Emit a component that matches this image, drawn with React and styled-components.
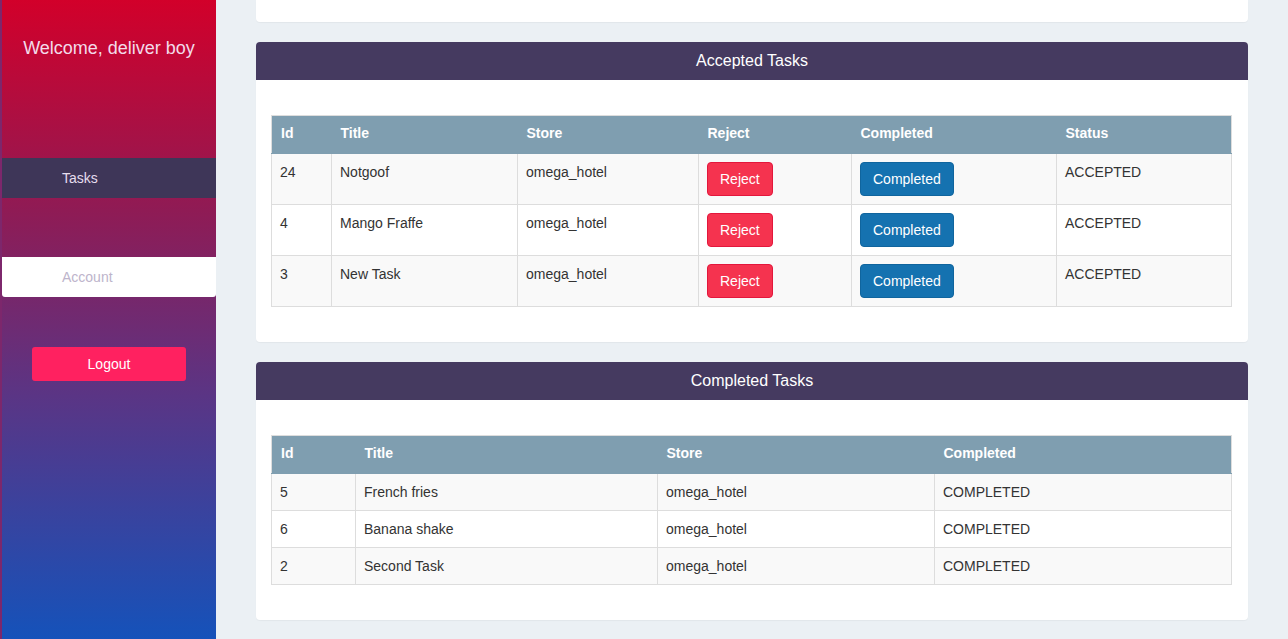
import React from "react";
import styled, { createGlobalStyle } from "styled-components";

const Global = createGlobalStyle`
  html, body {
    margin: 0;
    padding: 0;
    height: 100%;
    overflow: hidden;
  }
  body {
    font-family: "Liberation Sans", Arial, sans-serif;
    font-size: 14px;
    line-height: 1.42857;
    color: #333;
    background-color: #ebf0f4;
  }
`;

const Layout = styled.div`
  display: flex;
  width: 1288px;
  height: 639px;
`;

const Sidebar = styled.aside`
  width: 214px;
  flex-shrink: 0;
  border-left: 2px solid #7d276c;
  background: linear-gradient(to bottom, #d2002a 0%, #8f1b55 33%, #5a3585 62%, #1552ba 100%);
  display: flex;
  flex-direction: column;
`;

const Welcome = styled.h3`
  margin: 0;
  padding: 37px 0 0;
  height: 121px;
  text-align: center;
  font-size: 18px;
  font-weight: 400;
  line-height: 22px;
  color: #f3dbe9;
`;

const NavItem = styled.div`
  height: 40px;
  line-height: 40px;
  padding-left: 60px;
  font-size: 14px;
  color: ${(p) => (p.$active ? "#e6ddee" : "#bdb4cb")};
  background-color: ${(p) => (p.$active ? "#3e3658" : "#fff")};
  border-radius: ${(p) => (p.$active ? "0" : "0 0 3px 3px")};
  margin-top: ${(p) => p.$gap || 0}px;
`;

const LogoutButton = styled.button`
  margin: 50px 0 0 30px;
  width: 154px;
  height: 34px;
  border: none;
  border-radius: 3px;
  background-color: #ff2160;
  color: #fff;
  font-family: inherit;
  font-size: 14px;
`;

const Main = styled.main`
  flex: 1;
  padding: 0 40px;
  display: flex;
  flex-direction: column;
  gap: 20px;
`;

const TopCard = styled.div`
  height: 22px;
  background: #fff;
  border-radius: 0 0 4px 4px;
  box-shadow: 0 1px 1px rgba(0, 0, 0, 0.04);
`;

const Card = styled.section`
  background: #fff;
  border-radius: 4px;
  box-shadow: 0 1px 1px rgba(0, 0, 0, 0.04);
  overflow: hidden;
`;

const CardHeader = styled.header`
  height: 38px;
  line-height: 38px;
  text-align: center;
  background-color: #453a60;
  color: #fff;
  font-size: 16px;
`;

const CardBody = styled.div`
  padding: 35px 16px 35px 15px;
`;

const Table = styled.table`
  width: 100%;
  border-collapse: collapse;
  border: 1px solid #ddd;

  th {
    background-color: #7f9eb0;
    color: #fff;
    font-weight: 700;
    text-align: left;
    padding: 8px 8px 9px 9px;
    border-bottom: 1px solid #7f9eb0;
  }

  td {
    padding: 9px 8px 7px;
    border: 1px solid #ddd;
    vertical-align: top;
  }

  tbody tr:nth-child(odd) {
    background-color: #f9f9f9;
  }
`;

const ActionButton = styled.button`
  display: block;
  height: 34px;
  margin: -1px 0 1px;
  padding: 0 12px;
  border-radius: 4px;
  border: 1px solid ${(p) => (p.$variant === "danger" ? "#e3173c" : "#10659e")};
  background-color: ${(p) => (p.$variant === "danger" ? "#f5334f" : "#1572b0")};
  color: #fff;
  font-family: inherit;
  font-size: 14px;
`;

const accepted = [
  { id: 24, title: "Notgoof", store: "omega_hotel" },
  { id: 4, title: "Mango Fraffe", store: "omega_hotel" },
  { id: 3, title: "New Task", store: "omega_hotel" },
];

const completed = [
  { id: 5, title: "French fries", store: "omega_hotel" },
  { id: 6, title: "Banana shake", store: "omega_hotel" },
  { id: 2, title: "Second Task", store: "omega_hotel" },
];

const App = () => {
  return (
    <>
      <Global />
      <Layout>
        <Sidebar>
          <Welcome>Welcome, deliver boy</Welcome>
          <NavItem $active>Tasks</NavItem>
          <NavItem $gap={59}>Account</NavItem>
          <LogoutButton>Logout</LogoutButton>
        </Sidebar>
        <Main>
          <TopCard />
          <Card>
            <CardHeader>Accepted Tasks</CardHeader>
            <CardBody>
              <Table>
                <colgroup>
                  <col style={{ width: 60 }} />
                  <col style={{ width: 186 }} />
                  <col style={{ width: 181 }} />
                  <col style={{ width: 153 }} />
                  <col style={{ width: 205 }} />
                  <col />
                </colgroup>
                <thead>
                  <tr>
                    <th>Id</th>
                    <th>Title</th>
                    <th>Store</th>
                    <th>Reject</th>
                    <th>Completed</th>
                    <th>Status</th>
                  </tr>
                </thead>
                <tbody>
                  {accepted.map((t) => (
                    <tr key={t.id}>
                      <td>{t.id}</td>
                      <td>{t.title}</td>
                      <td>{t.store}</td>
                      <td>
                        <ActionButton $variant="danger">Reject</ActionButton>
                      </td>
                      <td>
                        <ActionButton>Completed</ActionButton>
                      </td>
                      <td>ACCEPTED</td>
                    </tr>
                  ))}
                </tbody>
              </Table>
            </CardBody>
          </Card>
          <Card>
            <CardHeader>Completed Tasks</CardHeader>
            <CardBody>
              <Table>
                <colgroup>
                  <col style={{ width: 84 }} />
                  <col style={{ width: 302 }} />
                  <col style={{ width: 277 }} />
                  <col />
                </colgroup>
                <thead>
                  <tr>
                    <th>Id</th>
                    <th>Title</th>
                    <th>Store</th>
                    <th>Completed</th>
                  </tr>
                </thead>
                <tbody>
                  {completed.map((t) => (
                    <tr key={t.id}>
                      <td>{t.id}</td>
                      <td>{t.title}</td>
                      <td>{t.store}</td>
                      <td>COMPLETED</td>
                    </tr>
                  ))}
                </tbody>
              </Table>
            </CardBody>
          </Card>
        </Main>
      </Layout>
    </>
  );
};

export default App;
